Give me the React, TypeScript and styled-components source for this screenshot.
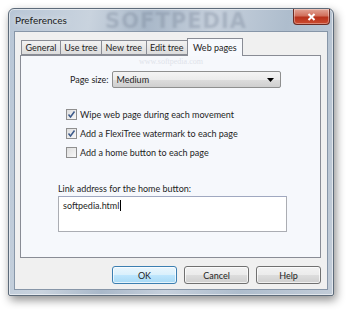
import styled, { createGlobalStyle } from 'styled-components';

const Global = createGlobalStyle`
  html, body { margin: 0; padding: 0; background: #ffffff; }
  body { font-family: Lato, "Noto Sans", sans-serif; font-size: 9px; color: #1e1e1e; }
`;

const Stage = styled.div`
  width: 350px;
  height: 312px;
  padding: 8px 0 0 8px;
  box-sizing: border-box;
`;
const Window = styled.div`
  width: 326px;
  height: 288px;
  box-sizing: border-box;
  border: 1px solid #5d6b7a;
  border-radius: 6px 6px 2px 2px;
  background: linear-gradient(100deg, #b8c6d6 0%, #c9d3de 22%, #a9b8c9 38%, #c6d0dc 55%, #aebdcd 75%, #c2ccd8 100%);
  box-shadow: 2px 4px 10px rgba(0, 0, 0, 0.45), inset 0 0 0 1px rgba(255, 255, 255, 0.55);
  display: flex;
  flex-direction: column;
`;
const TitleBar = styled.div`
  height: 22px;
  display: flex;
  align-items: flex-start;
  padding: 0 3px 0 6px;
`;
const Title = styled.span`
  font-size: 10px;
  color: #1a1a1a;
  margin-top: 5px;
  text-shadow: 0 0 6px rgba(255, 255, 255, 0.9);
`;
const Watermark = styled.span`
  font-family: "DejaVu Sans", sans-serif;
  font-weight: bold;
  font-size: 21px;
  letter-spacing: 1px;
  color: rgba(105, 120, 138, 0.3);
  filter: blur(1.2px);
  margin: 0 46px 0 auto;
`;
const CloseBtn = styled.div`
  width: 35px;
  height: 15px;
  border: 1px solid #6b2a22;
  border-top: none;
  border-radius: 0 0 4px 4px;
  background: linear-gradient(#e3a597 0%, #d1705c 45%, #b8321c 55%, #cc4b2f 100%);
  display: flex;
  align-items: center;
  justify-content: center;
  box-shadow: inset 0 0 0 1px rgba(255, 255, 255, 0.35);
`;
const Client = styled.div`
  flex: 1;
  margin: 0 5px 5px 5px;
  background: #f0f0f0;
  border: 1px solid #8796a8;
  display: flex;
  flex-direction: column;
  padding: 5px 6px 0 5px;
`;
const TabRow = styled.div`
  display: flex;
  align-items: flex-end;
  padding-left: 2px;
  height: 18px;
`;
const Tab = styled.div<{ $active?: boolean }>`
  height: ${p => (p.$active ? 18 : 15)}px;
  padding: 0 ${p => (p.$active ? 5 : 3.5)}px;
  margin-left: -1px;
  border: 1px solid #898c95;
  border-bottom: ${p => (p.$active ? 'none' : '1px solid #898c95')};
  background: ${p => (p.$active ? '#f7f9fd' : 'linear-gradient(#f2f2f2, #dcdcdc)')};
  display: flex;
  align-items: center;
  position: relative;
  z-index: ${p => (p.$active ? 2 : 1)};
  box-sizing: border-box;
  margin-bottom: ${p => (p.$active ? -1 : 0)}px;
`;
const Panel = styled.div`
  height: 203px;
  border: 1px solid #898c95;
  background: #f6f8fc;
  box-sizing: border-box;
  display: flex;
  flex-direction: column;
  padding: 0 0 0 37px;
`;
const PanelMark = styled.div`
  font-family: "Liberation Serif", serif;
  font-size: 8px;
  color: #dfe3ea;
  padding-left: 81px;
  height: 15px;
  line-height: 12px;
`;
const FieldRow = styled.div`
  display: flex;
  align-items: center;
  gap: 4px;
  padding-left: 12px;
`;
const Select = styled.div`
  width: 169px;
  height: 17px;
  box-sizing: border-box;
  border: 1px solid #8e8f8f;
  border-radius: 2px;
  background: linear-gradient(#f4f4f4 0%, #ebebeb 50%, #dddddd 51%, #cfcfcf 100%);
  display: flex;
  align-items: center;
  justify-content: space-between;
  padding: 0 6px 0 3px;
`;
const Checks = styled.div`
  display: flex;
  flex-direction: column;
  gap: 6px;
  margin-top: 20px;
  padding-left: 8px;
`;
const CheckRow = styled.div`
  display: flex;
  align-items: center;
  gap: 3px;
  height: 13px;
`;
const Box = styled.div`
  width: 11px;
  height: 11px;
  box-sizing: border-box;
  border: 1px solid #8f8f8f;
  background: linear-gradient(135deg, #dedede, #f8f8f8);
  display: flex;
  align-items: center;
  justify-content: center;
`;
const LinkLabel = styled.div`
  margin-top: 24px;
`;
const TextBox = styled.div`
  width: 229px;
  height: 36px;
  box-sizing: border-box;
  border: 1px solid #abadb3;
  border-top-color: #a0a8c0;
  background: #ffffff;
  margin-top: 2px;
  padding: 3px 4px;
  display: flex;
  align-items: flex-start;
`;
const Caret = styled.span`
  display: inline-block;
  width: 1px;
  height: 11px;
  background: #000;
  margin-left: 1px;
`;
const ButtonRow = styled.div`
  display: flex;
  justify-content: flex-end;
  gap: 7px;
  padding: 8px 0 0 0;
`;
const Button = styled.div<{ $default?: boolean }>`
  width: 65px;
  height: 18px;
  box-sizing: border-box;
  border: 1px solid ${p => (p.$default ? '#3c7fb1' : '#707070')};
  border-radius: 3px;
  background: ${p =>
    p.$default
      ? 'linear-gradient(#eaf6fd 0%, #d9f0fc 50%, #bee6fd 51%, #a7d9f5 100%)'
      : 'linear-gradient(#f2f2f2 0%, #ebebeb 50%, #dddddd 51%, #cfcfcf 100%)'};
  box-shadow: inset 0 0 0 1px rgba(255, 255, 255, 0.7);
  display: flex;
  align-items: center;
  justify-content: center;
`;

function Check({ on }: { on: boolean }) {
  return (
    <Box>
      {on && (
        <svg width="9" height="9" viewBox="0 0 9 9">
          <path d="M1.5 4.5 L3.5 7 L7.5 1.5" fill="none" stroke="#3c5a8a" strokeWidth="1.5" />
        </svg>
      )}
    </Box>
  );
}

export default function App() {
  return (
    <Stage>
      <Global />
      <Window>
        <TitleBar>
          <Title>Preferences</Title>
          <Watermark>SOFTPEDIA</Watermark>
          <CloseBtn>
            <svg width="9" height="8" viewBox="0 0 9 8">
              <path d="M1.5 1 L7.5 7 M7.5 1 L1.5 7" stroke="#ffffff" strokeWidth="2" />
            </svg>
          </CloseBtn>
        </TitleBar>
        <Client>
          <TabRow>
            <Tab>General</Tab>
            <Tab>Use tree</Tab>
            <Tab>New tree</Tab>
            <Tab>Edit tree</Tab>
            <Tab $active>Web pages</Tab>
          </TabRow>
          <Panel>
            <PanelMark>www.softpedia.com</PanelMark>
            <FieldRow>
              <span>Page size:</span>
              <Select>
                <span>Medium</span>
                <svg width="7" height="4" viewBox="0 0 7 4">
                  <path d="M0 0 H7 L3.5 4 Z" fill="#000" />
                </svg>
              </Select>
            </FieldRow>
            <Checks>
              <CheckRow>
                <Check on />
                <span>Wipe web page during each movement</span>
              </CheckRow>
              <CheckRow>
                <Check on />
                <span>Add a FlexiTree watermark to each page</span>
              </CheckRow>
              <CheckRow>
                <Check on={false} />
                <span>Add a home button to each page</span>
              </CheckRow>
            </Checks>
            <LinkLabel>Link address for the home button:</LinkLabel>
            <TextBox>
              softpedia.html<Caret />
            </TextBox>
          </Panel>
          <ButtonRow>
            <Button $default>OK</Button>
            <Button>Cancel</Button>
            <Button>Help</Button>
          </ButtonRow>
        </Client>
      </Window>
    </Stage>
  );
}
